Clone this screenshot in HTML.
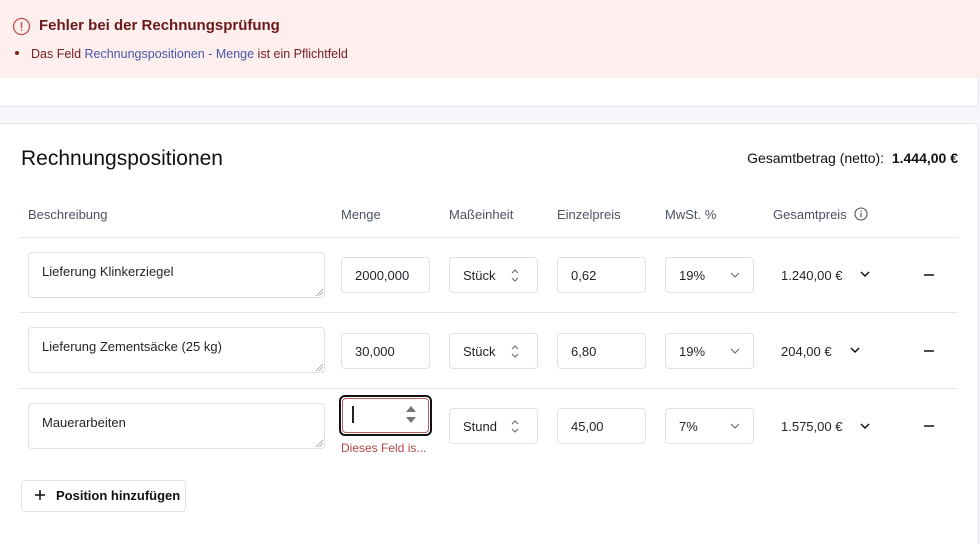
<html><head><style>
body{margin:0;width:980px;height:533px;background:#f6f7fa;font-family:"Liberation Sans",sans-serif;position:relative;overflow:hidden;color:#1f2328}
.a{position:absolute}
.banner{left:0;top:0;width:980px;height:78px;background:#fcefee}
.card1{left:0;top:78px;width:978px;height:28px;background:#fff;border-bottom:1px solid #e3e5ea;border-right:1px solid #e3e5ea;border-radius:0 0 6px 0}
.card2{left:0;top:123px;width:978px;height:420px;background:#fff;border-top:1px solid #e3e5ea;border-right:1px solid #e3e5ea;border-radius:0 6px 0 0}
.box{position:absolute;border:1px solid #dfe1e5;border-radius:4px;background:#fff;font-size:13px;box-sizing:border-box;padding-left:13px;display:flex;align-items:center}
.ta{align-items:flex-start;padding-top:11px}
.th{font-size:13px;color:#4b5262;top:207px}
.line{left:20px;width:938px;height:1px;background:#e5e7eb}
.t{font-size:13px}
</style></head><body>
<div class="a banner"></div>
<svg class="a" style="left:12px;top:17px" width="19" height="19" viewBox="0 0 19 19"><circle cx="9.5" cy="9.5" r="8" fill="none" stroke="#c0504d" stroke-width="1.3"/><rect x="8.8" y="5" width="1.4" height="6" fill="#c0504d"/><rect x="8.8" y="12.3" width="1.4" height="1.5" fill="#c0504d"/></svg>
<div class="a" style="left:39px;top:17px;font-size:15px;font-weight:bold;color:#6b1818">Fehler bei der Rechnungsprüfung</div>
<div class="a" style="left:15px;top:51px;width:4px;height:4px;border-radius:50%;background:#8a1c1c"></div>
<div class="a" style="left:31px;top:47px;font-size:12.5px;color:#7a2020">Das Feld <span style="color:#4a55a8">Rechnungspositionen - Menge</span> ist ein Pflichtfeld</div>
<div class="a card1"></div>
<div class="a card2"></div>
<div class="a" style="left:21px;top:147px;font-size:21px;color:#111">Rechnungspositionen</div>
<div class="a" style="right:22px;top:150px;font-size:14px;color:#111">Gesamtbetrag (netto): &nbsp;<b>1.444,00 €</b></div>
<div class="a th" style="left:28px">Beschreibung</div>
<div class="a th" style="left:341px">Menge</div>
<div class="a th" style="left:449px">Maßeinheit</div>
<div class="a th" style="left:557px">Einzelpreis</div>
<div class="a th" style="left:665px">MwSt. %</div>
<div class="a th" style="left:773px">Gesamtpreis</div>
<svg class="a" style="left:854px;top:207px" width="14" height="14" viewBox="0 0 14 14"><circle cx="7" cy="7" r="6" fill="none" stroke="#4b5262" stroke-width="1.1"/><rect x="6.4" y="6" width="1.2" height="4.2" fill="#4b5262"/><rect x="6.4" y="3.6" width="1.2" height="1.2" fill="#4b5262"/></svg>
<div class="a line" style="top:237px"></div>
<div class="a line" style="top:312px"></div>
<div class="a line" style="top:388px"></div>

<div class="box ta" style="left:28px;top:252px;width:297px;height:46px">Lieferung Klinkerziegel</div>
<div class="box" style="left:341px;top:257px;width:89px;height:36px">2000,000</div>
<div class="box" style="left:449px;top:257px;width:89px;height:36px">Stück</div>
<div class="box" style="left:557px;top:257px;width:89px;height:36px">0,62</div>
<div class="box" style="left:665px;top:257px;width:89px;height:36px">19%</div>
<div class="a t" style="left:781px;top:268px">1.240,00 €</div>

<div class="box ta" style="left:28px;top:327px;width:297px;height:46px">Lieferung Zementsäcke (25 kg)</div>
<div class="box" style="left:341px;top:333px;width:89px;height:36px">30,000</div>
<div class="box" style="left:449px;top:333px;width:89px;height:36px">Stück</div>
<div class="box" style="left:557px;top:333px;width:89px;height:36px">6,80</div>
<div class="box" style="left:665px;top:333px;width:89px;height:36px">19%</div>
<div class="a t" style="left:781px;top:344px">204,00 €</div>

<div class="box ta" style="left:28px;top:403px;width:297px;height:46px">Mauerarbeiten</div>
<div class="a" style="left:339px;top:395px;width:93px;height:41px;border:2px solid #111;border-radius:6px;box-sizing:border-box"></div>
<div class="a" style="left:342px;top:398px;width:87px;height:35px;border:1px solid #b06060;border-radius:4px;box-sizing:border-box"></div>
<div class="a" style="left:352px;top:406px;width:1.5px;height:17px;background:#222"></div>
<div class="a" style="left:406px;top:406px;width:0;height:0;border-left:5px solid transparent;border-right:5px solid transparent;border-bottom:6px solid #777"></div>
<div class="a" style="left:406px;top:417px;width:0;height:0;border-left:5px solid transparent;border-right:5px solid transparent;border-top:6px solid #777"></div>
<div class="a" style="left:341px;top:441px;font-size:12px;color:#b04848">Dieses Feld is...</div>
<div class="box" style="left:449px;top:408px;width:89px;height:36px">Stund</div>
<div class="box" style="left:557px;top:408px;width:89px;height:36px">45,00</div>
<div class="box" style="left:665px;top:408px;width:89px;height:36px">7%</div>
<div class="a t" style="left:781px;top:419px">1.575,00 €</div>

<svg class="a" style="left:0;top:0" width="980" height="533">
<g fill="none" stroke="#666" stroke-width="1.1">
<path d="M512 273l3-3 3 3M512 278l3 3 3-3"/><path d="M512 349l3-3 3 3M512 354l3 3 3-3"/><path d="M512 424l3-3 3 3M512 429l3 3 3-3"/>
<path d="M731 273l4 4 4-4"/><path d="M731 349l4 4 4-4"/><path d="M731 424l4 4 4-4"/>
</g>
<g fill="none" stroke="#111" stroke-width="1.5">
<path d="M861 272l4 4 4-4"/><path d="M851 348l4 4 4-4"/><path d="M861 424l4 4 4-4"/>
<path d="M924 275h10M924 351h10M924 426h10"/>
<path d="M35 495h10M40 490v10"/>
</g>
<g stroke="#999" stroke-width="0.8"><path d="M316 296l7-7M319 296l4-4M316 371l7-7M319 371l4-4M316 447l7-7M319 447l4-4"/></g>
</svg>
<div class="a" style="left:21px;top:480px;width:165px;height:32px;border:1px solid #dfe1e5;border-radius:4px;box-sizing:border-box"></div>
<div class="a" style="left:56px;top:488px;font-size:13px;font-weight:bold;color:#111">Position hinzufügen</div>
</body></html>
